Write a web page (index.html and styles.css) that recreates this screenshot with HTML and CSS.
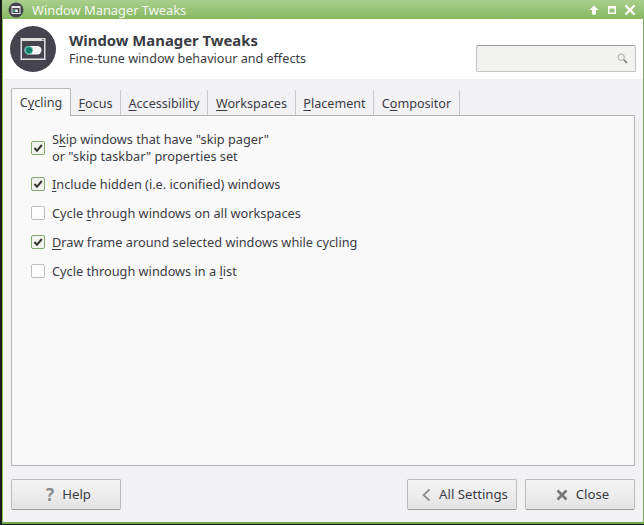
FILE: index.html
```html
<!DOCTYPE html>
<html lang="en">
<head>
<meta charset="utf-8">
<title>Window Manager Tweaks</title>
<link rel="stylesheet" href="styles.css">
</head>
<body>
<div class="window">
  <div class="titlebar">
    <svg class="title-icon" width="16" height="16" viewBox="0 0 16 16"><circle cx="8" cy="8" r="7.500" fill="#45444e"/><rect x="3.500" y="4" width="9" height="8" fill="#e8e8e8"/><rect x="4.500" y="6" width="7" height="5" fill="#45444e"/><rect x="5" y="7.500" width="5" height="2.500" rx="1.200" fill="#fff"/><circle cx="6.200" cy="8.700" r="1.200" fill="#1f8a78"/></svg>
    <span class="title-text">Window Manager Tweaks</span>
    <div class="title-buttons">
      <svg width="12" height="12" viewBox="0 0 12 12"><path d="M6 1.500 10.500 6H8v4.500H4V6H1.500Z" fill="#fff"/></svg>
      <svg width="12" height="12" viewBox="0 0 12 12"><path d="M2 2h8v8H2Z M3.500 4.500v4h5v-4Z" fill="#fff" fill-rule="evenodd"/></svg>
      <svg width="12" height="12" viewBox="0 0 12 12"><path d="M1.500 1.500 10.500 10.500M10.500 1.500 1.500 10.500" stroke="#fff" stroke-width="2.400"/></svg>
    </div>
  </div>
  <header class="header">
    <svg class="app-icon" width="48" height="48" viewBox="0 0 48 48"><circle cx="24" cy="24" r="23" fill="#45444e"/><rect x="11.500" y="13" width="25" height="22" fill="#dedede"/><rect x="13" y="16" width="22" height="17.500" fill="#45444e"/><rect x="33" y="13.800" width="2" height="1.500" fill="#777"/><rect x="15.500" y="21" width="17" height="8.500" rx="4.200" fill="#f4f4f4"/><circle cx="19.700" cy="25.200" r="4.200" fill="#58b8a6"/><circle cx="20" cy="25.200" r="3" fill="#0f7f6d"/></svg>
    <div class="header-text">
      <h1 class="header-title">Window Manager Tweaks</h1>
      <p class="header-sub">Fine-tune window behaviour and effects</p>
    </div>
    <div class="search">
      <svg width="11" height="11" viewBox="0 0 11 11"><circle cx="4.200" cy="4.200" r="3.200" fill="none" stroke="#aaa" stroke-width="1"/><path d="M6.700 6.700 10 10" stroke="#888" stroke-width="1.800"/></svg>
    </div>
  </header>
  <main class="body">
    <nav class="tabs">
      <div class="tab active">C<u>y</u>cling</div>
      <div class="tab tab-focus"><u>F</u>ocus</div>
      <div class="tab tab-access"><u>A</u>ccessibility</div>
      <div class="tab tab-work"><u>W</u>orkspaces</div>
      <div class="tab tab-place"><u>P</u>lacement</div>
      <div class="tab tab-comp">C<u>o</u>mpositor</div>
    </nav>
    <section class="panel">
      <div class="opt opt-two">
        <span class="check on"><svg width="10" height="10" viewBox="0 0 10 10"><path d="M1.500 5 4 7.800 8.800 2" fill="none" stroke="#333" stroke-width="2"/></svg></span>
        <span class="label">S<u>k</u>ip windows that have "skip pager"<br>or "skip taskbar" properties set</span>
      </div>
      <div class="opt">
        <span class="check on"><svg width="10" height="10" viewBox="0 0 10 10"><path d="M1.500 5 4 7.800 8.800 2" fill="none" stroke="#333" stroke-width="2"/></svg></span>
        <span class="label"><u>I</u>nclude hidden (i.e. iconified) windows</span>
      </div>
      <div class="opt">
        <span class="check"></span>
        <span class="label">Cycle <u>t</u>hrough windows on all workspaces</span>
      </div>
      <div class="opt">
        <span class="check on"><svg width="10" height="10" viewBox="0 0 10 10"><path d="M1.500 5 4 7.800 8.800 2" fill="none" stroke="#333" stroke-width="2"/></svg></span>
        <span class="label"><u>D</u>raw frame around selected windows while cycling</span>
      </div>
      <div class="opt">
        <span class="check"></span>
        <span class="label">Cycle through windows in a <u>l</u>ist</span>
      </div>
    </section>
    <footer class="actions">
      <button class="btn"><span class="help-mark">?</span>Help</button>
      <div class="spacer"></div>
      <button class="btn"><svg width="10" height="14" viewBox="1 0 10 14"><path d="M9.500 1.500 3.500 7l6 5.500" fill="none" stroke="#8b8b8b" stroke-width="1.700"/></svg>All Settings</button>
      <button class="btn"><svg width="12" height="12" viewBox="0 0 12 12"><path d="M1.500 1.500 10.500 10.500M10.500 1.500 1.500 10.500" stroke="#777" stroke-width="2.600"/></svg>Close</button>
    </footer>
  </main>
</div>
</body>
</html>
```
FILE: styles.css
```css
* { box-sizing: border-box; }
html, body { margin: 0; height: 100%; background: #1b1b1b; }
body { font-family: "Noto Sans", sans-serif; font-size: 12.6px; color: #3b3b44; overflow: hidden; }
u { text-underline-offset: 2px; text-decoration-thickness: 1px; }
.window { width: 642px; height: 524px; margin-left: 2px; display: flex; flex-direction: column; border-right: 1px solid #7fa861; border-left: 1px solid #8cba64; border-bottom: 2px solid #6fa84c; }
.titlebar { height: 19px; flex: none; display: flex; align-items: center; margin: 0 -1px; padding: 0 8px 0 6px; background: linear-gradient(#a9cf8c, #86b862); color: #fff; }
.title-icon { flex: none; }
.title-text { margin-left: 8px; font-size: 12.85px; color: #f4f8ef; }
.title-buttons { margin-left: auto; display: flex; gap: 6px; align-items: center; }
.header { height: 60px; flex: none; background: #fff; display: flex; align-items: center; padding: 0 7px 0 6px; }
.app-icon { flex: none; }
.header-text { margin-left: 12px; }
.header-title { margin: 0; font-size: 14.85px; font-weight: 700; line-height: 20px; color: #3b3b44; }
.header-sub { margin: 0; font-size: 12.6px; line-height: 18px; color: #3b3b44; }
.search { margin-left: auto; margin-top: 18px; width: 160px; height: 27px; border: 1px solid #c4c4c4; border-top-color: #9a9a9a; border-radius: 2px; background: #f2f2f1; display: flex; align-items: center; justify-content: flex-end; padding-right: 7px; }
.body { flex: 1; display: flex; flex-direction: column; background: #f2f2f4; padding: 9px 8px 12px 8px; min-height: 0; }
.tabs { display: flex; height: 28px; flex: none; position: relative; z-index: 1; }
.tab { text-align: center; line-height: 27px; border-right: 1px solid #c9c9cb; margin-top: 2px; height: 25px; color: #3b3b44; }
.tab.active { height: 28px; margin-top: 0; background: #f9f9f9; border: 1px solid #b9b9b9; border-bottom: none; border-radius: 2px 2px 0 0; line-height: 27px; width: 60px; }
.tab-focus { width: 50px; }
.tab-access { width: 87px; }
.tab-work { width: 88px; }
.tab-place { width: 78px; }
.tab-comp { width: 86px; }
.panel { flex: 1; background: #f9f9f9; border: 1px solid #b4b4b4; margin-top: -1px; padding: 15px 19px 0; display: flex; flex-direction: column; gap: 11px; min-height: 0; font-size: 12.75px; }
.opt { display: flex; align-items: center; gap: 7px; line-height: 17px; min-height: 18px; }
.opt-two { margin-bottom: -1px; }
.check { width: 14px; height: 14px; flex: none; background: #fdfdfd; border: 1px solid #bdbdbd; border-radius: 2px; display: flex; align-items: center; justify-content: center; }
.check.on { background: #f2f2f0; border-color: #82a86a; }
.label { display: block; }
.actions { flex: none; display: flex; gap: 8px; margin-top: 13px; }
.spacer { flex: 1; }
.btn { width: 110px; height: 31px; font: inherit; font-size: 13.2px; color: #3b3b44; background: linear-gradient(#f4f4f4, #e4e4e4); border: 1px solid #bcbcbc; border-bottom-color: #9c9c9c; border-radius: 2px; display: flex; align-items: center; justify-content: center; gap: 8px; padding: 0 0 2px 5px; }
.btn svg { margin-top: 2px; }
.help-mark { font-size: 17px; line-height: 1; font-weight: 700; color: #8a8a8a; margin-top: 2px; }
```
